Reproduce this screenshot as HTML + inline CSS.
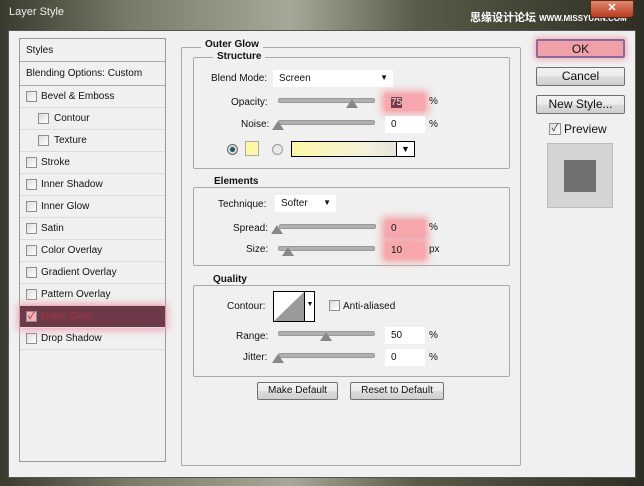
<!DOCTYPE html><html><head><style>
*{margin:0;padding:0;box-sizing:border-box}
body{width:644px;height:486px;overflow:hidden;position:relative;font-family:"Liberation Sans","Noto Sans CJK SC",sans-serif;font-size:10px;color:#111;background:#3a3a32}
.a{position:absolute}
.frame{left:0;top:0;width:644px;height:486px;background:linear-gradient(90deg,#3a3a2e,#7a7a68 20%,#a8a898 45%,#5a5a48 65%,#2e2e24 100%)}
.client{left:8px;top:30px;width:628px;height:448px;background:#f0f0f0;border:1px solid #555}
.t{white-space:nowrap}
.cb{width:11px;height:11px;border:1px solid #8f8f8f;background:linear-gradient(135deg,#ddd,#fff)}
.row{left:20px;width:145px;height:22px;border-bottom:1px solid #dcdcdc}
.grp{border:1px solid #a9a9a9;border-radius:2px}
.lbl{background:#f0f0f0;font-weight:bold;padding:0 4px}
.inp{background:#fff;height:17px;padding:3px 6px}
.slider{height:5px;background:#b0b0b0;border:1px solid #999;border-radius:2px}
.thumb{width:0;height:0;border-left:6px solid transparent;border-right:6px solid transparent;border-bottom:9px solid #888}
.btn{border:1px solid #707070;background:linear-gradient(#f2f2f2,#ebebeb 50%,#dcdcdc 51%,#cfcfcf);text-align:center;border-radius:2px}
.glow{box-shadow:0 0 8px 3px #f2a0a8;background:#f6a8ac}
</style></head><body>
<div class="a frame"></div>
<div class="a t" style="left:9px;top:6px;color:#eee;font-size:11px">Layer Style</div>
<div class="a t" style="left:470px;top:9px;color:#fff;font-size:11px;font-weight:bold">思缘设计论坛 <span style="font-size:8px">WWW.MISSYUAN.COM</span></div>
<div class="a" style="left:590px;top:0;width:44px;height:18px;background:linear-gradient(#e08a70,#b83a20);border:1px solid #5a2a1a;border-radius:0 0 4px 4px;color:#fff;text-align:center;font-weight:bold;font-size:11px">✕</div>
<div class="a client"></div>

<div class="a" style="left:19px;top:38px;width:147px;height:424px;background:#f0f0f0;border:1px solid #999"></div>
<div class="a row" style="top:39px;height:23px;border-bottom:1px solid #aaa"><span class="a t" style="left:6px;top:6px">Styles</span></div>
<div class="a row" style="top:62px;height:24px;border-bottom:1px solid #aaa"><span class="a t" style="left:6px;top:6px">Blending Options: Custom</span></div>
<div class="a row" style="top:86px"><div class="a cb" style="left:6px;top:5px"></div><span class="a t" style="left:21px;top:5px">Bevel &amp; Emboss</span></div>
<div class="a row" style="top:108px"><div class="a cb" style="left:18px;top:5px"></div><span class="a t" style="left:34px;top:5px">Contour</span></div>
<div class="a row" style="top:130px"><div class="a cb" style="left:18px;top:5px"></div><span class="a t" style="left:34px;top:5px">Texture</span></div>
<div class="a row" style="top:152px"><div class="a cb" style="left:6px;top:5px"></div><span class="a t" style="left:21px;top:5px">Stroke</span></div>
<div class="a row" style="top:174px"><div class="a cb" style="left:6px;top:5px"></div><span class="a t" style="left:21px;top:5px">Inner Shadow</span></div>
<div class="a row" style="top:196px"><div class="a cb" style="left:6px;top:5px"></div><span class="a t" style="left:21px;top:5px">Inner Glow</span></div>
<div class="a row" style="top:218px"><div class="a cb" style="left:6px;top:5px"></div><span class="a t" style="left:21px;top:5px">Satin</span></div>
<div class="a row" style="top:240px"><div class="a cb" style="left:6px;top:5px"></div><span class="a t" style="left:21px;top:5px">Color Overlay</span></div>
<div class="a row" style="top:262px"><div class="a cb" style="left:6px;top:5px"></div><span class="a t" style="left:21px;top:5px">Gradient Overlay</span></div>
<div class="a row" style="top:284px"><div class="a cb" style="left:6px;top:5px"></div><span class="a t" style="left:21px;top:5px">Pattern Overlay</span></div>
<div class="a row" style="top:306px;background:#6e3a4a;box-shadow:0 0 8px 2px #f0a0b0"><div class="a cb" style="left:6px;top:5px;background:#f4b0b8;color:#a02030;font-size:10px;line-height:9px;text-align:center">✓</div><span class="a t" style="left:21px;top:5px;color:#a8303f">Outer Glow</span></div>
<div class="a row" style="top:328px"><div class="a cb" style="left:6px;top:5px"></div><span class="a t" style="left:21px;top:5px">Drop Shadow</span></div>

<div class="a grp" style="left:181px;top:47px;width:340px;height:419px"></div>
<div class="a lbl t" style="left:201px;top:39px">Outer Glow</div>
<div class="a grp" style="left:193px;top:57px;width:317px;height:112px"></div>
<div class="a lbl t" style="left:213px;top:51px">Structure</div>
<div class="a t" style="left:211px;top:73px">Blend Mode:</div>
<div class="a inp t" style="left:273px;top:70px;width:120px">Screen<span class="a" style="right:5px;top:3px;font-size:8px">▼</span></div>
<div class="a t" style="left:231px;top:97px">Opacity:</div>
<div class="a slider" style="left:278px;top:98px;width:97px"></div>
<div class="a thumb" style="left:346px;top:99px"></div>
<div class="a inp t glow" style="left:385px;top:94px;width:40px"><span style="background:#7a3a4a;color:#eee">75</span></div>
<div class="a t" style="left:429px;top:96px">%</div>
<div class="a t" style="left:241px;top:119px">Noise:</div>
<div class="a slider" style="left:278px;top:120px;width:97px"></div>
<div class="a thumb" style="left:272px;top:121px"></div>
<div class="a inp t" style="left:385px;top:116px;width:40px">0</div>
<div class="a t" style="left:429px;top:119px">%</div>
<div class="a" style="left:227px;top:144px;width:11px;height:11px;border-radius:50%;border:1px solid #666;background:radial-gradient(#1e5a6a 35%,#ddd 45%)"></div>
<div class="a" style="left:245px;top:141px;width:14px;height:15px;background:#fdf8a8;border:1px solid #aaa"></div>
<div class="a" style="left:272px;top:144px;width:11px;height:11px;border-radius:50%;border:1px solid #999;background:#e8e8e8"></div>
<div class="a" style="left:291px;top:141px;width:124px;height:16px;border:1px solid #000;background:linear-gradient(90deg,#fdf8a8,#f4f2d8 60%,#ddd)"></div>
<div class="a" style="left:396px;top:141px;width:19px;height:16px;border:1px solid #000;background:#fff;text-align:center;font-size:9px;line-height:14px">▼</div>

<div class="a grp" style="left:193px;top:187px;width:317px;height:79px"></div>
<div class="a lbl t" style="left:210px;top:176px">Elements</div>
<div class="a t" style="left:218px;top:199px">Technique:</div>
<div class="a inp t" style="left:275px;top:195px;width:61px">Softer<span class="a" style="right:5px;top:3px;font-size:8px">▼</span></div>
<div class="a t" style="left:233px;top:223px">Spread:</div>
<div class="a slider" style="left:279px;top:224px;width:97px"></div>
<div class="a thumb" style="left:271px;top:225px"></div>
<div class="a inp t glow" style="left:385px;top:220px;width:40px">0</div>
<div class="a t" style="left:429px;top:222px">%</div>
<div class="a t" style="left:246px;top:244px">Size:</div>
<div class="a slider" style="left:278px;top:246px;width:97px"></div>
<div class="a thumb" style="left:282px;top:247px"></div>
<div class="a inp t glow" style="left:385px;top:242px;width:40px">10</div>
<div class="a t" style="left:429px;top:244px">px</div>

<div class="a grp" style="left:193px;top:285px;width:317px;height:92px"></div>
<div class="a lbl t" style="left:209px;top:274px">Quality</div>
<div class="a t" style="left:227px;top:301px">Contour:</div>
<div class="a" style="left:273px;top:291px;width:42px;height:31px;border:1px solid #000;background:#fff;overflow:hidden">
<svg width="30" height="29" style="position:absolute;left:0;top:0"><polygon points="0,29 30,0 30,29" fill="#9a9a9a"/></svg>
<div class="a" style="left:30px;top:-1px;width:11px;height:31px;border-left:1px solid #000;font-size:7px;text-align:center;line-height:28px">▼</div></div>
<div class="a cb" style="left:329px;top:300px"></div>
<div class="a t" style="left:343px;top:301px">Anti-aliased</div>
<div class="a t" style="left:236px;top:331px">Range:</div>
<div class="a slider" style="left:278px;top:331px;width:97px"></div>
<div class="a thumb" style="left:320px;top:332px"></div>
<div class="a inp t" style="left:385px;top:327px;width:40px">50</div>
<div class="a t" style="left:429px;top:330px">%</div>
<div class="a t" style="left:243px;top:352px">Jitter:</div>
<div class="a slider" style="left:278px;top:353px;width:97px"></div>
<div class="a thumb" style="left:272px;top:354px"></div>
<div class="a inp t" style="left:385px;top:349px;width:40px">0</div>
<div class="a t" style="left:429px;top:352px">%</div>
<div class="a btn t" style="left:257px;top:382px;width:81px;height:18px;line-height:16px">Make Default</div>
<div class="a btn t" style="left:350px;top:382px;width:94px;height:18px;line-height:16px">Reset to Default</div>

<div class="a btn" style="left:536px;top:39px;width:89px;height:19px;line-height:17px;font-size:12px;background:#f0a0a8;border:2px solid #8a6a9a;box-shadow:0 0 6px 2px #f4b0b8">OK</div>
<div class="a btn" style="left:536px;top:67px;width:89px;height:19px;line-height:17px;font-size:12px">Cancel</div>
<div class="a btn t" style="left:536px;top:95px;width:89px;height:19px;line-height:17px;font-size:12px">New Style...</div>
<div class="a cb" style="left:549px;top:123px;width:12px;height:12px;color:#334;font-size:10px;line-height:10px;text-align:center">✓</div>
<div class="a t" style="left:564px;top:122px;font-size:12px">Preview</div>
<div class="a" style="left:547px;top:143px;width:66px;height:65px;background:#d4d4d4;border:1px solid #bbb"></div>
<div class="a" style="left:564px;top:160px;width:32px;height:32px;background:#707070"></div>
</body></html>
